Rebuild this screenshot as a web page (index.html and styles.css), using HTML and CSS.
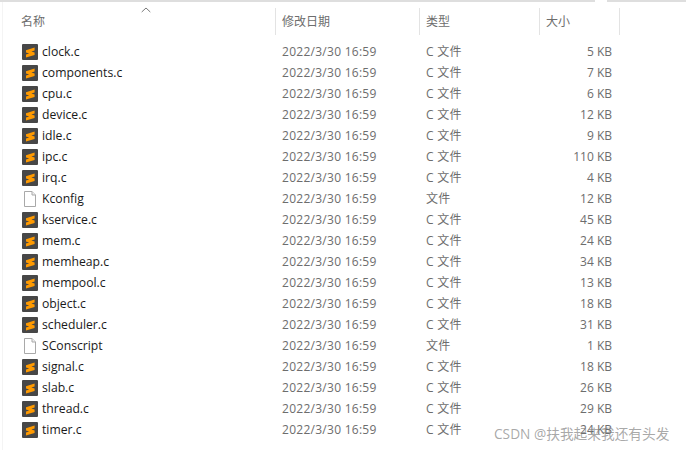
FILE: index.html
```html
<!DOCTYPE html>
<html lang="zh">
<head>
<meta charset="utf-8">
<title>文件列表</title>
<link rel="stylesheet" href="styles.css">
</head>
<body>
<svg class="defs" width="0" height="0" aria-hidden="true">
  <symbol id="sublime" viewBox="0 0 16 16">
    <rect width="16" height="16" rx="1" fill="#474747"/>
    <path d="M4 6.3 12.6 3.6V6.6L9.4 7.6 12.6 8.6V11L4 13.5V10.6L7.2 9.6 4 8.6Z" fill="#ff9a00"/>
  </symbol>
  <symbol id="blank" viewBox="0 0 16 16">
    <path d="M2.5.5H10L13.5 4V15.5H2.5Z" fill="#fff" stroke="#a9a9a9"/>
    <path d="M10 .5V4H13.5" fill="#f0f0f0" stroke="#a9a9a9"/>
  </symbol>
</svg>
<div class="top-rule"><span class="top-gap"></span></div>
<main class="explorer">
  <span class="sort-arrow"><svg width="10" height="6" viewBox="0 0 10 6"><path d="M.7 5 5 1l4.3 4" fill="none" stroke="#7a7a7a"/></svg></span>
  <div class="header">
    <div class="hcell h-name">名称</div>
    <div class="hcell">修改日期</div>
    <div class="hcell">类型</div>
    <div class="hcell">大小</div>
  </div>
  <div class="rows">
    <div class="row"><span class="name"><svg class="icon"><use href="#sublime"/></svg>clock.c</span><span class="cell">2022/3/30 16:59</span><span class="cell">C 文件</span><span class="cell size">5 KB</span></div>
    <div class="row"><span class="name"><svg class="icon"><use href="#sublime"/></svg>components.c</span><span class="cell">2022/3/30 16:59</span><span class="cell">C 文件</span><span class="cell size">7 KB</span></div>
    <div class="row"><span class="name"><svg class="icon"><use href="#sublime"/></svg>cpu.c</span><span class="cell">2022/3/30 16:59</span><span class="cell">C 文件</span><span class="cell size">6 KB</span></div>
    <div class="row"><span class="name"><svg class="icon"><use href="#sublime"/></svg>device.c</span><span class="cell">2022/3/30 16:59</span><span class="cell">C 文件</span><span class="cell size">12 KB</span></div>
    <div class="row"><span class="name"><svg class="icon"><use href="#sublime"/></svg>idle.c</span><span class="cell">2022/3/30 16:59</span><span class="cell">C 文件</span><span class="cell size">9 KB</span></div>
    <div class="row"><span class="name"><svg class="icon"><use href="#sublime"/></svg>ipc.c</span><span class="cell">2022/3/30 16:59</span><span class="cell">C 文件</span><span class="cell size">110 KB</span></div>
    <div class="row"><span class="name"><svg class="icon"><use href="#sublime"/></svg>irq.c</span><span class="cell">2022/3/30 16:59</span><span class="cell">C 文件</span><span class="cell size">4 KB</span></div>
    <div class="row"><span class="name"><svg class="icon"><use href="#blank"/></svg>Kconfig</span><span class="cell">2022/3/30 16:59</span><span class="cell">文件</span><span class="cell size">12 KB</span></div>
    <div class="row"><span class="name"><svg class="icon"><use href="#sublime"/></svg>kservice.c</span><span class="cell">2022/3/30 16:59</span><span class="cell">C 文件</span><span class="cell size">45 KB</span></div>
    <div class="row"><span class="name"><svg class="icon"><use href="#sublime"/></svg>mem.c</span><span class="cell">2022/3/30 16:59</span><span class="cell">C 文件</span><span class="cell size">24 KB</span></div>
    <div class="row"><span class="name"><svg class="icon"><use href="#sublime"/></svg>memheap.c</span><span class="cell">2022/3/30 16:59</span><span class="cell">C 文件</span><span class="cell size">34 KB</span></div>
    <div class="row"><span class="name"><svg class="icon"><use href="#sublime"/></svg>mempool.c</span><span class="cell">2022/3/30 16:59</span><span class="cell">C 文件</span><span class="cell size">13 KB</span></div>
    <div class="row"><span class="name"><svg class="icon"><use href="#sublime"/></svg>object.c</span><span class="cell">2022/3/30 16:59</span><span class="cell">C 文件</span><span class="cell size">18 KB</span></div>
    <div class="row"><span class="name"><svg class="icon"><use href="#sublime"/></svg>scheduler.c</span><span class="cell">2022/3/30 16:59</span><span class="cell">C 文件</span><span class="cell size">31 KB</span></div>
    <div class="row"><span class="name"><svg class="icon"><use href="#blank"/></svg>SConscript</span><span class="cell">2022/3/30 16:59</span><span class="cell">文件</span><span class="cell size">1 KB</span></div>
    <div class="row"><span class="name"><svg class="icon"><use href="#sublime"/></svg>signal.c</span><span class="cell">2022/3/30 16:59</span><span class="cell">C 文件</span><span class="cell size">18 KB</span></div>
    <div class="row"><span class="name"><svg class="icon"><use href="#sublime"/></svg>slab.c</span><span class="cell">2022/3/30 16:59</span><span class="cell">C 文件</span><span class="cell size">26 KB</span></div>
    <div class="row"><span class="name"><svg class="icon"><use href="#sublime"/></svg>thread.c</span><span class="cell">2022/3/30 16:59</span><span class="cell">C 文件</span><span class="cell size">29 KB</span></div>
    <div class="row"><span class="name"><svg class="icon"><use href="#sublime"/></svg>timer.c</span><span class="cell">2022/3/30 16:59</span><span class="cell">C 文件</span><span class="cell size">24 KB</span></div>
  </div>
  <span class="watermark">CSDN @扶我起来我还有头发</span>
</main>
</body>
</html>
```
FILE: styles.css
```css
html, body {
  margin: 0;
  height: 100%;
  background: #fff;
  overflow: hidden;
}
body {
  font-family: "Open Sans", "Noto Sans CJK SC", sans-serif;
  font-size: 12px;
  line-height: 21px;
  color: #6d6d6d;
}
.defs { position: absolute; }
.top-rule {
  position: relative;
  height: 2px;
  background: #dedede;
}
.top-gap {
  position: absolute;
  left: 595px;
  width: 12px;
  height: 2px;
  background: #fff;
}
.explorer {
  position: relative;
  height: 448px;
  overflow: hidden;
  box-sizing: border-box;
  margin-left: 2px;
  border-left: 1px solid #f4f4f4;
}
.sort-arrow {
  position: absolute;
  left: 138px;
  top: 5px;
  line-height: 0;
}
.header {
  display: grid;
  grid-template-columns: 272px 144px 120px 81px;
  margin-top: 6px;
  height: 27px;
}
.hcell {
  padding-left: 6px;
  line-height: 27px;
  border-left: 1px solid #e3e3e3;
}
.hcell:last-child {
  border-right: 1px solid #e3e3e3;
}
.h-name {
  border-left: 0;
  padding-left: 18px;
}
.rows {
  margin-top: 6px;
}
.row {
  display: grid;
  grid-template-columns: 272px 144px 120px 73px;
  height: 21px;
  align-items: center;
}
.name {
  display: flex;
  align-items: center;
  gap: 4px;
  padding-left: 19px;
  color: #1a1a1a;
  font-size: 12.2px;
}
.icon {
  width: 16px;
  height: 16px;
  flex: none;
}
.cell {
  padding-left: 7px;
  letter-spacing: 0.27px;
}
.size {
  text-align: right;
  padding: 0;
  letter-spacing: 0;
}
.watermark {
  position: absolute;
  left: 491px;
  top: 422px;
  font-size: 13.7px;
  line-height: 20px;
  color: rgba(130, 130, 130, 0.7);
  white-space: nowrap;
}
```
